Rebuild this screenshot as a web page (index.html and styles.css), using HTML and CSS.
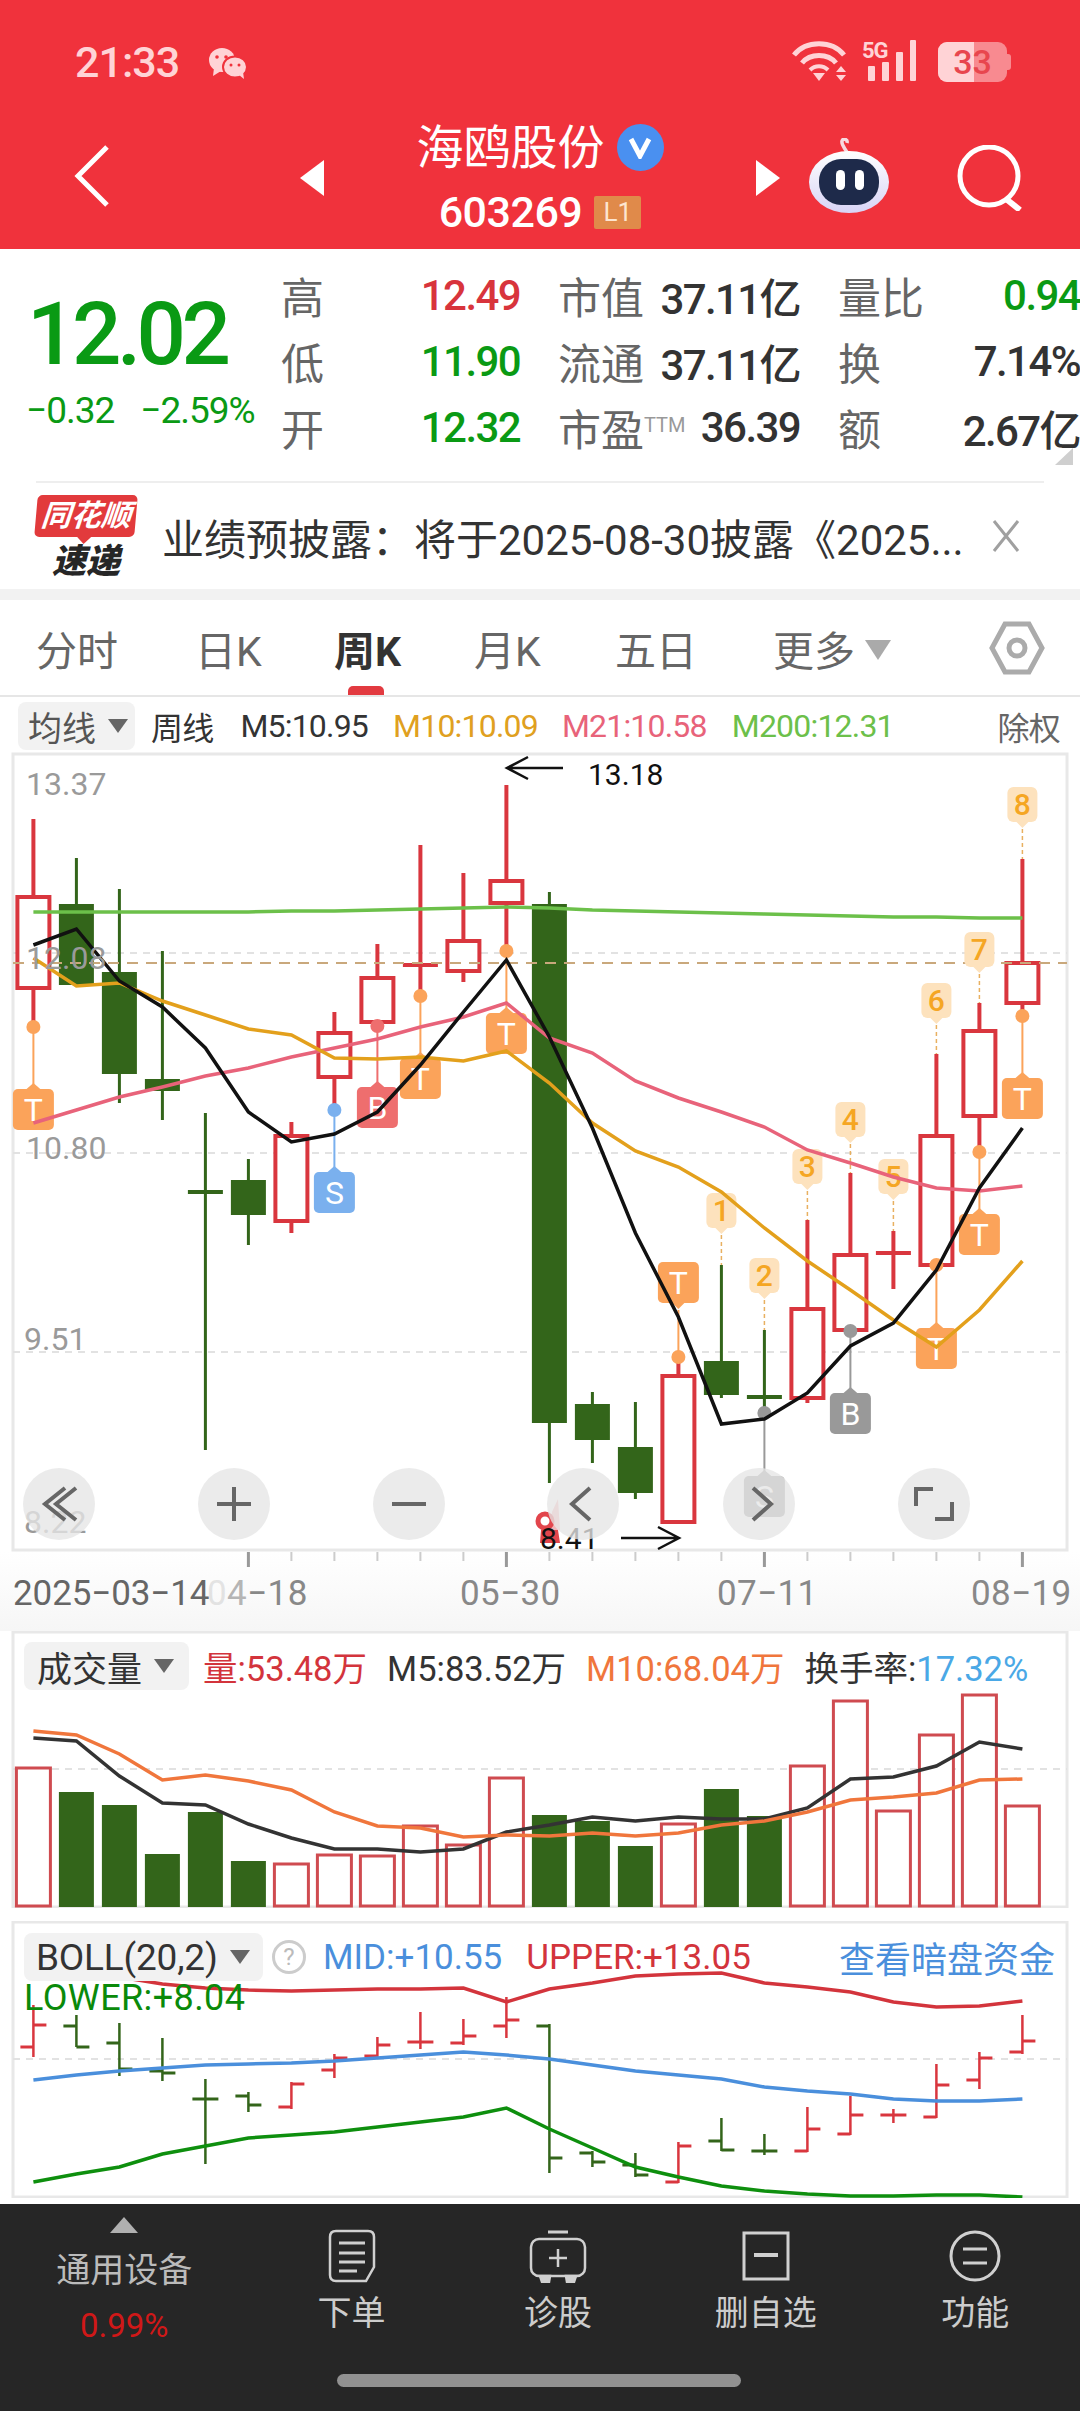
FILE: index.html
```html
<!DOCTYPE html>
<html lang="zh-CN">
<head>
    <meta charset="UTF-8">
    <meta name="viewport" content="width=device-width, initial-scale=1.0">
    <title>海鸥股份 603269</title>
    <link rel="stylesheet" href="styles.css">
</head>
<body>
    <div class="page">
        <header class="top">
            <div class="status-bar">
                <span class="clock">21:33</span>
                <svg class="wechat" width="40" height="32" viewBox="0 0 40 32">
                    <ellipse cx="14" cy="13" rx="13" ry="12" fill="#ffd3d6"/>
                    <path d="M6 21 L5 29 L13 24Z" fill="#ffd3d6"/>
                    <ellipse cx="27" cy="20" rx="12" ry="10.5" fill="#ffd3d6" stroke="#f0323c" stroke-width="2"/>
                    <path d="M31 28 L36 32 L35 25Z" fill="#ffd3d6"/>
                    <circle cx="9" cy="10" r="1.8" fill="#f0323c"/><circle cx="18" cy="10" r="1.8" fill="#f0323c"/>
                    <circle cx="23" cy="18" r="1.5" fill="#f0323c"/><circle cx="31" cy="18" r="1.5" fill="#f0323c"/>
                </svg>
                <div class="status-right">
                    <svg width="60" height="42" viewBox="0 0 60 42" fill="none" stroke="#ffd3d6" stroke-width="5">
                        <path d="M3 15 C15 0 41 0 53 15"/>
                        <path d="M11 23 C19 13 37 13 45 23"/>
                        <path d="M19 30 C24 25 32 25 37 30" stroke-width="4"/>
                        <path d="M22 33 H34 L28 41Z" fill="#ffd3d6" stroke="none"/>
                        <path d="M50 26 L55 32 H45Z M45 35 H55 L50 41Z" fill="#ffd3d6" stroke="none"/>
                    </svg>
                    <svg class="signal" width="58" height="42" viewBox="0 0 58 42" fill="#ffd3d6">
                        <text x="0" y="18" class="five-g">5G</text>
                        <rect x="6" y="26" width="7" height="15" rx="1"/>
                        <rect x="20" y="22" width="7" height="19" rx="1"/>
                        <rect x="34" y="12" width="7" height="29" rx="1"/>
                        <rect x="48" y="0" width="6" height="41" rx="1"/>
                    </svg>
                    <div class="battery"><span class="battery-fill"></span><span class="battery-num">33</span></div>
                    <span class="battery-nub"></span>
                </div>
            </div>
            <nav class="nav-bar">
                <svg class="back" width="36" height="64" viewBox="0 0 36 64" fill="none" stroke="#fff" stroke-width="5"><path d="M33 3 L4 32 L33 61"/></svg>
                <span class="tri tri-left"></span>
                <div class="stock">
                    <div class="stock-name">海鸥股份<span class="v-badge"><svg width="24" height="22" viewBox="0 0 24 22" fill="none" stroke="#fff" stroke-width="5"><path d="M3 2 L12 19 L21 2"/></svg></span></div>
                    <div class="stock-code">603269<span class="level">L1</span></div>
                </div>
                <span class="tri tri-right"></span>
                <svg class="robot" width="82" height="76" viewBox="0 0 82 76">
                    <defs>
                        <linearGradient id="head" x1="0" y1="0" x2="0" y2="1">
                            <stop offset="0" stop-color="#fff"/><stop offset="1" stop-color="#d8d4f6"/>
                        </linearGradient>
                    </defs>
                    <path d="M40 16 C37 10 33 7 34 3 C35 0 40 1 39 5" fill="none" stroke="#f6d9e0" stroke-width="3.5"/>
                    <ellipse cx="41" cy="44" rx="40" ry="31" fill="url(#head)"/>
                    <rect x="11" y="21" width="60" height="46" rx="22" fill="#1e2a4a"/>
                    <rect x="28" y="32" width="9" height="20" rx="4.5" fill="#fff"/>
                    <rect x="47" y="32" width="9" height="20" rx="4.5" fill="#fff"/>
                </svg>
                <svg class="search" width="68" height="66" viewBox="0 0 68 66" fill="none" stroke="#fff" stroke-width="5"><circle cx="33" cy="31" r="29"/><path d="M50 54 L64 65" stroke-width="6"/></svg>
            </nav>
        </header>

        <section class="quote">
            <div class="quote-main">
                <div class="price">12.02</div>
                <div class="change"><span>−0.32</span><span>−2.59%</span></div>
            </div>
            <div class="quote-grid">
                <div class="cell"><span class="label">高</span><span class="val up">12.49</span></div>
                <div class="cell"><span class="label">市值</span><span class="val">37.11亿</span></div>
                <div class="cell"><span class="label">量比</span><span class="val down">0.94</span></div>
                <div class="cell"><span class="label">低</span><span class="val down">11.90</span></div>
                <div class="cell"><span class="label">流通</span><span class="val">37.11亿</span></div>
                <div class="cell"><span class="label">换</span><span class="val">7.14%</span></div>
                <div class="cell"><span class="label">开</span><span class="val down">12.32</span></div>
                <div class="cell"><span class="label">市盈<sup class="ttm">TTM</sup></span><span class="val">36.39</span></div>
                <div class="cell"><span class="label">额</span><span class="val">2.67亿</span></div>
            </div>
            <span class="corner"></span>
        </section>

        <section class="ticker">
            <div class="logo">
                <div class="logo-top">同花顺</div>
                <div class="logo-bottom">速递</div>
            </div>
            <div class="ticker-text">业绩预披露：将于2025-08-30披露《2025...</div>
            <svg class="close" width="28" height="34" viewBox="0 0 28 34" fill="none" stroke="#a0a0a0" stroke-width="3"><path d="M2 2 L26 32 M26 2 L2 32"/></svg>
        </section>

        <div class="band"></div>

        <div class="tabs">
            <span class="tab tab-1">分时</span>
            <span class="tab tab-2">日K</span>
            <span class="tab tab-3 active">周K</span>
            <span class="tab tab-4">月K</span>
            <span class="tab tab-5">五日</span>
            <span class="tab tab-6">更多<i class="tab-arrow"></i></span>
            <svg class="hex" width="56" height="54" viewBox="0 0 56 54" fill="none" stroke="#ababab" stroke-width="5"><path d="M16 3 H40 L53 27 L40 51 H16 L3 27Z"/><circle cx="28" cy="27" r="8"/></svg>
        </div>

        <div class="ma-row">
            <span class="pill pill-ma">均线<i class="pill-arrow"></i></span>
            <span class="ma ma-week">周线</span>
            <span class="ma ma-5">M5:10.95</span>
            <span class="ma ma-10">M10:10.09</span>
            <span class="ma ma-21">M21:10.58</span>
            <span class="ma ma-200">M200:12.31</span>
            <span class="ma ma-fq">除权</span>
        </div>

        <svg id="kline" class="chart kline" width="1080" height="798" viewBox="0 754 1080 798"></svg>
        <svg id="axis" class="axis" width="1080" height="79" viewBox="0 1552 1080 79"></svg>

        <section class="panel panel-vol">
            <svg id="volume" class="chart" width="1080" height="277" viewBox="0 1631 1080 277"></svg>
            <div class="legend">
                <span class="pill pill-vol">成交量<i class="pill-arrow"></i></span>
                <span class="lg lg-vol">量:53.48万</span>
                <span class="lg lg-m5">M5:83.52万</span>
                <span class="lg lg-m10">M10:68.04万</span>
                <span class="lg lg-rate">换手率:<b>17.32%</b></span>
            </div>
        </section>

        <section class="panel panel-boll">
            <svg id="boll" class="chart" width="1080" height="277" viewBox="0 1921 1080 277"></svg>
            <div class="legend">
                <span class="pill pill-boll">BOLL(20,2)<i class="pill-arrow"></i></span>
                <span class="help">?</span>
                <span class="lg lg-mid">MID:+10.55</span>
                <span class="lg lg-upper">UPPER:+13.05</span>
                <span class="lg lg-link">查看暗盘资金</span>
            </div>
            <div class="lower">LOWER:+8.04</div>
        </section>

        <footer class="bottom">
            <div class="bottom-items">
                <div class="sector">
                    <span class="sector-arrow"></span>
                    <span class="sector-name">通用设备</span>
                    <span class="sector-pct">0.99%</span>
                </div>
                <div class="action">
                    <svg width="48" height="54" viewBox="0 0 48 54" fill="none" stroke="#d0d0d0" stroke-width="2.5"><path d="M8 2 H40 Q46 2 46 8 V38 L38 52 H8 Q2 52 2 46 V8 Q2 2 8 2Z"/><path d="M11 14 H37 M11 24 H37 M11 33 H37 M11 42 H29" stroke-width="3"/></svg>
                    <span>下单</span>
                </div>
                <div class="action">
                    <svg width="58" height="54" viewBox="0 0 58 54" fill="none" stroke="#d0d0d0" stroke-width="2.5"><path d="M19 3 H39" stroke-width="3"/><rect x="2" y="10" width="54" height="37" rx="8"/><path d="M29 20 V38 M20 29 H38"/><path d="M11 47 H21 L20 53 H13Z M37 47 H47 L45 53 H38Z" fill="#d0d0d0"/></svg>
                    <span>诊股</span>
                </div>
                <div class="action action-wide">
                    <svg width="48" height="50" viewBox="0 0 48 50" fill="none" stroke="#d0d0d0" stroke-width="3"><rect x="2" y="2" width="44" height="46"/><path d="M12 24 H36" stroke-width="4"/></svg>
                    <span>删自选</span>
                </div>
                <div class="action action-wide">
                    <svg width="52" height="52" viewBox="0 0 52 52" fill="none" stroke="#d0d0d0" stroke-width="3"><circle cx="26" cy="26" r="24"/><path d="M14 19 H38 M14 33 H38"/></svg>
                    <span>功能</span>
                </div>
            </div>
            <div class="home-bar"></div>
        </footer>
    </div>
    <script src="script.js"></script>
</body>
</html>
```

FILE: styles.css
```css
* {
    box-sizing: border-box;
}

body {
    margin: 0;
    background-color: #fff;
    font-family: Roboto, "Noto Sans CJK SC", sans-serif;
    color: #333;
}

.page {
    width: 1080px;
    height: 2412px;
    overflow: hidden;
    display: flex;
    flex-direction: column;
}

/* header */
.top {
    height: 249px;
    flex: none;
    background-color: #f0323c;
}

.status-bar {
    height: 124px;
    padding: 40px 69px 0 75px;
    display: flex;
    align-items: flex-start;
}

.clock {
    font-size: 43px;
    line-height: 44px;
    font-weight: 500;
    color: #ffd3d6;
    letter-spacing: -1px;
}

.wechat {
    margin: 7px 0 0 29px;
}

.status-right {
    margin-left: auto;
    display: flex;
    align-items: flex-start;
}

.signal {
    margin-left: 11px;
    overflow: visible;
}

.five-g {
    font-size: 22px;
    font-weight: 700;
    letter-spacing: -1px;
}

.battery {
    position: relative;
    width: 69px;
    height: 40px;
    margin: 2px 0 0 18px;
    border-radius: 9px;
    background-color: rgba(255, 211, 214, 0.55);
    text-align: center;
    overflow: hidden;
}

.battery-fill {
    position: absolute;
    left: 0;
    top: 0;
    bottom: 0;
    width: 36px;
    background-color: #ffd3d6;
}

.battery-num {
    position: relative;
    font-size: 34px;
    line-height: 40px;
    font-weight: 500;
    color: #e8464e;
}

.battery-nub {
    width: 4px;
    height: 16px;
    margin-top: 14px;
    border-radius: 0 3px 3px 0;
    background-color: rgba(255, 211, 214, 0.55);
}

.nav-bar {
    height: 125px;
    display: flex;
    align-items: flex-start;
    position: relative;
}

.back {
    margin: 20px 0 0 74px;
}

.tri {
    width: 0;
    height: 0;
    margin-top: 36px;
    border-top: 18px solid transparent;
    border-bottom: 18px solid transparent;
}

.tri-left {
    margin-left: 190px;
    border-right: 24px solid #fff;
}

.tri-right {
    border-left: 24px solid #fff;
}

.stock {
    width: 432px;
    text-align: center;
    color: #fff;
}

.stock-name {
    height: 58px;
    font-size: 47px;
    line-height: 48px;
    display: flex;
    justify-content: center;
    align-items: flex-start;
}

.v-badge {
    width: 47px;
    height: 47px;
    margin-left: 12px;
    border-radius: 50%;
    background-color: #4a90f0;
    display: flex;
    align-items: center;
    justify-content: center;
}

.stock-code {
    margin-top: 8px;
    font-size: 43px;
    line-height: 44px;
    font-weight: 500;
    letter-spacing: -0.5px;
    display: flex;
    justify-content: center;
    align-items: center;
    gap: 12px;
}

.level {
    width: 47px;
    height: 33px;
    background-color: #e08a4a;
    border-radius: 2px;
    font-size: 26px;
    line-height: 33px;
    font-weight: 400;
    letter-spacing: 0;
    color: #fde5d0;
}

.robot {
    margin: 14px 0 0 28px;
}

.search {
    margin: 21px 0 0 66px;
}

/* quote block */
.quote {
    position: relative;
    height: 232px;
    flex: none;
    display: flex;
    padding-top: 13px;
}

.quote-main {
    width: 281px;
    flex: none;
}

.price {
    margin: 24px 0 0 27px;
    font-size: 87px;
    line-height: 96px;
    font-weight: 500;
    letter-spacing: -4.5px;
    color: #0a9a14;
}

.change {
    margin: 9px 0 0 26px;
    display: flex;
    gap: 26px;
    font-size: 37px;
    line-height: 40px;
    letter-spacing: -1px;
    color: #0a9a14;
}

.quote-grid {
    flex: none;
    display: grid;
    grid-template-columns: 239px 280px 280px;
    grid-auto-rows: 66px;
}

.cell {
    display: flex;
    justify-content: space-between;
    align-items: center;
    padding-left: 38px;
}

.cell:nth-child(3n + 1) {
    padding-left: 0;
}

.label {
    font-size: 43px;
    color: #666;
    white-space: nowrap;
}

.ttm {
    font-size: 20px;
    color: #999;
    vertical-align: 14px;
    line-height: 0;
}

.val {
    font-size: 42px;
    font-weight: 500;
    letter-spacing: -1.6px;
    white-space: nowrap;
    color: #333;
}

.up {
    color: #d8343c;
}

.down {
    color: #0a9a14;
}

.corner {
    position: absolute;
    right: 7px;
    top: 199px;
    width: 0;
    height: 0;
    border-left: 18px solid transparent;
    border-bottom: 17px solid #cfcfcf;
}

/* news ticker */
.ticker {
    height: 108px;
    flex: none;
    margin: 0 36px;
    border-top: 2px solid #eee;
    display: flex;
    align-items: center;
}

.logo {
    width: 100px;
    flex: none;
    text-align: center;
}

.logo-top {
    position: relative;
    height: 42px;
    background-color: #e23a3c;
    border-radius: 5px;
    transform: skewX(-5deg);
    color: #fff;
    font-size: 30px;
    line-height: 42px;
    font-weight: 700;
    font-style: italic;
}

.logo-top::after {
    content: "";
    position: absolute;
    left: 42px;
    bottom: -7px;
    border-left: 8px solid transparent;
    border-right: 8px solid transparent;
    border-top: 8px solid #e23a3c;
}

.logo-bottom {
    margin-top: 7px;
    font-size: 34px;
    line-height: 34px;
    font-weight: 900;
    font-style: italic;
    color: #262626;
}

.ticker-text {
    margin-left: 26px;
    width: 820px;
    flex: none;
    font-size: 42px;
    white-space: nowrap;
}

.close {
    margin-left: 10px;
}

.band {
    height: 11px;
    flex: none;
    background-color: #f2f2f2;
}

/* period tabs */
.tabs {
    position: relative;
    height: 97px;
    flex: none;
    padding-left: 36px;
    border-bottom: 2px solid #e6e6e6;
    display: flex;
    align-items: center;
}

.tab {
    font-size: 41px;
    color: #666;
    white-space: nowrap;
}

.tab-1 { width: 159px; }
.tab-2 { width: 139px; }
.tab-3 { width: 140px; }
.tab-4 { width: 141px; }
.tab-5 { width: 158px; }
.tab-6 { width: 216px; }

.tab.active {
    color: #333;
    font-weight: 700;
}

.tab.active::after {
    content: "";
    position: absolute;
    left: 348px;
    bottom: 0;
    width: 36px;
    height: 9px;
    border-radius: 5px 5px 0 0;
    background-color: #e23a40;
}

.tab-arrow {
    display: inline-block;
    margin-left: 10px;
    vertical-align: 6px;
    border-left: 13px solid transparent;
    border-right: 13px solid transparent;
    border-top: 20px solid #aaa;
}

/* moving average row */
.ma-row {
    position: relative;
    height: 57px;
    flex: none;
    padding: 3px 0 2px 18px;
    display: flex;
    align-items: center;
    font-size: 32px;
    white-space: nowrap;
}

.pill {
    height: 48px;
    flex: none;
    display: flex;
    align-items: center;
    background-color: #f2f2f2;
    border-radius: 8px;
    font-size: 34px;
    color: #333;
}

.pill-ma {
    width: 117px;
    padding-left: 10px;
    color: #555;
}

.pill-arrow {
    margin-left: 12px;
    border-left: 10px solid transparent;
    border-right: 10px solid transparent;
    border-top: 14px solid #666;
}

.ma {
    letter-spacing: -0.8px;
}

.ma-week { margin-left: 16px; }
.ma-5 { margin-left: 27px; color: #333; }
.ma-10 { margin-left: 25px; color: #e0a020; }
.ma-21 { margin-left: 24px; color: #e8637a; }
.ma-200 { margin-left: 25px; color: #6cc04a; }
.ma-fq { margin-left: auto; margin-right: 20px; color: #666; }

/* charts */
.chart {
    display: block;
    flex: none;
}

.kline {
    overflow: visible;
    position: relative;
    z-index: 1;
}

.axis {
    display: block;
    flex: none;
    background: linear-gradient(#fff, #f6f6f6);
}

.axis-label {
    font-size: 35px;
    letter-spacing: 0.4px;
    fill: #888;
}

.axis-label-first {
    letter-spacing: -0.1px;
    fill: #666;
}

.price-label {
    font-size: 32px;
    fill: #9a9a9a;
}

.note {
    font-size: 30px;
    fill: #111;
}

.mark-text {
    font-size: 32px;
    fill: #fff;
    text-anchor: middle;
}

.tag-text {
    font-size: 30px;
    font-weight: 500;
    fill: #f5a623;
    text-anchor: middle;
}

.panel {
    position: relative;
    flex: none;
}

.panel-boll {
    margin-top: 13px;
}

.legend {
    position: absolute;
    left: 24px;
    top: 10px;
    right: 25px;
    display: flex;
    align-items: center;
    white-space: nowrap;
}

.lg {
    font-size: 34.5px;
}

.pill-vol {
    width: 165px;
    padding-left: 13px;
    font-size: 35px;
}

.lg-vol { margin-left: 14px; color: #d3343c; }
.lg-m5 { margin-left: 20px; color: #333; }
.lg-m10 { margin-left: 20px; color: #f0763c; }
.lg-rate { margin-left: 20px; color: #333; }

.lg-rate b {
    font-weight: 400;
    color: #4aa8e6;
}

.pill-boll {
    width: 239px;
    padding-left: 12px;
    font-size: 37px;
    letter-spacing: -0.2px;
}

.help {
    width: 34px;
    height: 34px;
    margin-left: 9px;
    flex: none;
    border: 3px solid #ccc;
    border-radius: 50%;
    font-size: 24px;
    line-height: 28px;
    text-align: center;
    color: #bbb;
}

.lg-mid { margin-left: 17px; color: #4a8fdc; font-size: 35px; }
.lg-upper { margin-left: 24px; color: #d3343c; font-size: 35px; }
.lg-link { margin-left: auto; font-size: 36px; color: #4a8fdc; }

.lower {
    position: absolute;
    left: 24px;
    top: 57px;
    font-size: 36px;
    line-height: 40px;
    letter-spacing: 0.4px;
    color: #0a8a0a;
}

/* bottom bar */
.bottom {
    height: 207px;
    margin-top: 6px;
    flex: none;
    background-color: #262626;
    position: relative;
}

.bottom-items {
    display: flex;
    height: 170px;
}

.sector {
    width: 249px;
    padding: 13px 0 0 0;
    display: flex;
    flex-direction: column;
    align-items: center;
}

.sector-arrow {
    border-left: 14px solid transparent;
    border-right: 14px solid transparent;
    border-bottom: 16px solid #b0b0b0;
}

.sector-name {
    margin-top: 13px;
    font-size: 34px;
    line-height: 48px;
    color: #bbb;
}

.sector-pct {
    margin-top: 12px;
    font-size: 33px;
    line-height: 40px;
    color: #d01818;
}

.action {
    width: 207px;
    padding-top: 25px;
    display: flex;
    flex-direction: column;
    align-items: center;
    font-size: 34px;
    color: #ccc;
}

.action-wide {
    width: 210px;
}

.action svg {
    height: 54px;
    margin-bottom: 6px;
}

.action span {
    line-height: 48px;
}

.home-bar {
    width: 404px;
    height: 13px;
    margin-left: 337px;
    border-radius: 7px;
    background-color: #919191;
}
```

FILE: script.js
```javascript
const RED = '#d9363e';
const GREEN = '#33651a';
const X = i => 33.4 + 43 * i;

// high, body top, body bottom, low, colour (page pixels)
const candles = [
    [819, 897, 988, 1027, 'r'], [858, 904, 985, 985, 'g'], [889, 972, 1074, 1103, 'g'],
    [951, 1079, 1091, 1120, 'g'], [1113, 1190, 1194, 1450, 'g'], [1159, 1180, 1215, 1245, 'g'],
    [1122, 1136, 1221, 1233, 'r'], [1012, 1033, 1077, 1110, 'r'], [944, 978, 1022, 1027, 'r'],
    [845, 963, 967, 996, 'r'], [873, 941, 971, 982, 'r'], [785, 881, 903, 951, 'r'],
    [892, 904, 1423, 1483, 'g'], [1392, 1404, 1440, 1463, 'g'], [1402, 1447, 1493, 1499, 'g'],
    [1357, 1376, 1522, 1522, 'r'], [1265, 1361, 1395, 1398, 'g'], [1330, 1395, 1399, 1413, 'g'],
    [1220, 1309, 1398, 1403, 'r'], [1173, 1255, 1330, 1330, 'r'], [1231, 1251, 1255, 1289, 'r'],
    [1054, 1136, 1265, 1265, 'r'], [1003, 1031, 1116, 1152, 'r'], [859, 963, 1003, 1016, 'r']
];

const m5 = [945, 929, 981, 1007, 1048, 1112, 1142, 1134, 1112, 1065, 1012, 960, 1037, 1128, 1233, 1317, 1424, 1419, 1393, 1346, 1323, 1270, 1188, 1128];
const m10 = [958, 986, 983, 1001, 1015, 1029, 1035, 1058, 1059, 1057, 1061, 1051, 1083, 1123, 1151, 1167, 1192, 1228, 1261, 1290, 1320, 1347, 1310, 1261];
const m21 = [1123, 1110, 1097, 1087, 1076, 1068, 1057, 1048, 1039, 1027, 1017, 1003, 1038, 1053, 1081, 1098, 1112, 1127, 1150, 1163, 1177, 1188, 1191, 1186];
const m200 = [912, 912, 912, 912, 912, 912, 911, 911, 910, 909, 908, 907, 908, 910, 911, 912, 913, 914, 915, 916, 917, 917, 918, 918];

const volTop = [1768, 1792, 1805, 1854, 1812, 1861, 1864, 1855, 1856, 1826, 1845, 1778, 1815, 1821, 1846, 1824, 1789, 1816, 1766, 1701, 1811, 1735, 1695, 1806];
const volBlack = [1738, 1741, 1776, 1803, 1805, 1824, 1838, 1849, 1849, 1852, 1849, 1832, 1825, 1817, 1821, 1817, 1819, 1819, 1808, 1779, 1777, 1766, 1742, 1749];
const volOrange = [1731, 1735, 1754, 1780, 1775, 1781, 1790, 1812, 1826, 1828, 1837, 1835, 1836, 1833, 1836, 1833, 1825, 1821, 1812, 1800, 1797, 1793, 1780, 1779];

const upper = [1978, 1977, 1977, 1984, 1988, 1990, 1991, 1990, 1989, 1989, 1988, 2002, 1989, 1983, 1976, 1974, 1973, 1983, 1987, 1992, 2002, 2007, 2006, 2001];
const mid = [2080, 2075, 2071, 2068, 2065, 2064, 2063, 2061, 2058, 2055, 2052, 2055, 2059, 2065, 2071, 2075, 2079, 2087, 2091, 2094, 2099, 2101, 2101, 2099];
const lower = [2182, 2174, 2167, 2154, 2146, 2138, 2135, 2132, 2127, 2122, 2117, 2108, 2129, 2148, 2167, 2177, 2186, 2191, 2194, 2196, 2196, 2195, 2195, 2197];

// high, left tick, right tick, low (y in the boll panel)
const bars = [
    [2005, 2047, 2025, 2057], [2015, 2026, 2047, 2047], [2023, 2043, 2069, 2076], [2038, 2071, 2073, 2081],
    [2079, 2099, 2099, 2164], [2092, 2096, 2105, 2112], [2082, 2107, 2084, 2109], [2054, 2070, 2058, 2078],
    [2037, 2056, 2045, 2057], [2012, 2042, 2042, 2049], [2019, 2043, 2036, 2045], [1997, 2026, 2020, 2038],
    [2024, 2026, 2158, 2173], [2151, 2153, 2162, 2167], [2153, 2165, 2175, 2177], [2142, 2182, 2146, 2183],
    [2118, 2141, 2150, 2151], [2134, 2151, 2151, 2155], [2107, 2151, 2129, 2152], [2096, 2134, 2115, 2135],
    [2109, 2115, 2115, 2123], [2064, 2117, 2085, 2118], [2052, 2080, 2058, 2089], [2015, 2052, 2041, 2054]
];

// candle index, dot y, box top, colour, letter
const marks = [
    [0, 1027, 1089, '#fba35a', 'T'], [7, 1110, 1172, '#7ab0ee', 'S'], [8, 1026, 1087, '#ee6e6e', 'B'],
    [9, 996, 1058, '#fba35a', 'T'], [11, 951, 1013, '#fba35a', 'T'], [17, 1413, 1476, '#999999', 'S'],
    [19, 1331, 1393, '#999999', 'B'], [21, 1265, 1328, '#fba35a', 'T'], [22, 1152, 1214, '#fba35a', 'T'],
    [23, 1016, 1078, '#fba35a', 'T']
];

// candle index, tag top, dash end, number
const tags = [
    [16, 1193, 1265, 1], [17, 1258, 1330, 2], [18, 1149, 1220, 3], [19, 1102, 1173, 4],
    [20, 1159, 1231, 5], [21, 983, 1054, 6], [22, 932, 1003, 7], [23, 787, 859, 8]
];

const rect = (x, y, w, h, attrs) => `<rect x="${x}" y="${y}" width="${w}" height="${h}" ${attrs}/>`;
const line = (x1, y1, x2, y2, color, width, extra = '') =>
    `<line x1="${x1}" y1="${y1}" x2="${x2}" y2="${y2}" stroke="${color}" stroke-width="${width}" ${extra}/>`;
const poly = (ys, color, width) =>
    `<polyline points="${ys.map((y, i) => X(i) + ',' + y).join(' ')}" fill="none" stroke="${color}" stroke-width="${width}" stroke-linejoin="miter"/>`;
const frame = (top, bottom) =>
    rect(13, top, 1054, bottom - top, 'fill="none" stroke="#e8e8e8" stroke-width="3"');
const grid = y => line(13, y, 1067, y, '#e2e2e2', 2, 'stroke-dasharray="7 6"');

function drawCandle(c, i) {
    const [high, top, bottom, low, color] = c;
    const x = X(i);
    if (color === 'g') {
        return line(x, high, x, low, GREEN, 3) + rect(x - 17.5, top, 35, bottom - top, `fill="${GREEN}"`);
    }
    if (bottom - top < 6) {
        return line(x, high, x, low, RED, 4) + rect(x - 17.5, top, 35, bottom - top, `fill="${RED}"`);
    }
    return line(x, high, x, top, RED, 4) + line(x, bottom, x, low, RED, 4) +
        rect(x - 16, top, 32, bottom - top, `fill="#fff" stroke="${RED}" stroke-width="4"`);
}

function drawMark(m) {
    const [i, dotY, boxTop, color, letter] = m;
    const x = X(i);
    return line(x, dotY, x, boxTop - 5, color, 2) +
        `<circle cx="${x}" cy="${dotY}" r="7" fill="${color}"/>` +
        `<path d="M${x - 8} ${boxTop + 1} L${x} ${boxTop - 6} L${x + 8} ${boxTop + 1}Z" fill="${color}"/>` +
        rect(x - 20.5, boxTop, 41, 41, `rx="5" fill="${color}"`) +
        `<text x="${x}" y="${boxTop + 32}" class="mark-text">${letter}</text>`;
}

function drawTag(t) {
    const [i, top, dashEnd, num] = t;
    const x = X(i);
    return line(x, top + 42, x, dashEnd, '#e8b060', 1.5, 'stroke-dasharray="4 3"') +
        `<path d="M${x - 8} ${top + 33} L${x} ${top + 41} L${x + 8} ${top + 33}Z" fill="#fde2bd"/>` +
        rect(x - 15, top, 30, 35, 'rx="6" fill="#fde2bd"') +
        `<text x="${x}" y="${top + 28}" class="tag-text">${num}</text>`;
}

function drawButton(cx, inner) {
    return `<circle cx="${cx}" cy="1504" r="36" fill="#e6e6e6" fill-opacity="0.78"/>` +
        `<g fill="none" stroke="#666" stroke-width="4">${inner}</g>`;
}

function drawKline() {
    let s = frame(754, 1550);
    s += grid(953) + grid(1153) + grid(1352);
    s += candles.map(drawCandle).join('');
    s += marks.map(drawMark).join('');
    // T above the candle at 15
    const tx = X(15);
    s += line(tx, 1357, tx, 1310, '#fba35a', 2) + `<circle cx="${tx}" cy="1357" r="7" fill="#fba35a"/>` +
        `<path d="M${tx - 8} 1301 L${tx} 1309 L${tx + 8} 1301Z" fill="#fba35a"/>` +
        rect(tx - 20.5, 1262, 41, 41, 'rx="5" fill="#fba35a"') +
        `<text x="${tx}" y="1294" class="mark-text">T</text>`;
    s += line(13, 963, 1067, 963, '#c9a87c', 2, 'stroke-dasharray="11 8"');
    s += tags.map(drawTag).join('');
    s += poly(m200, '#6cc04a', 3.5) + poly(m21, '#e8637a', 3.5) + poly(m10, '#e3a01c', 3.5) + poly(m5, '#111', 3.5);

    [['13.37', 795, 26], ['12.08', 969, 26], ['10.80', 1159, 26], ['9.51', 1350, 24], ['8.22', 1533, 24]].forEach(l => {
        s += `<text x="${l[2]}" y="${l[1]}" class="price-label">${l[0]}</text>`;
    });

    // hand drawn notes
    s += `<g fill="none" stroke="#111" stroke-width="2.5"><path d="M563 768 H508 M528 757 L507 768 L528 779"/><path d="M621 1538 H678 M658 1527 L679 1538 L658 1549"/></g>`;
    s += `<path d="M550 1530 L552 1512 L558 1499 L560 1530Z" fill="#f3b4b6"/>`;
    s += `<circle cx="545" cy="1521" r="7" fill="none" stroke="#e2454c" stroke-width="5"/>`;
    s += `<path d="M541 1530 H558 L560 1543 H540Z" fill="#e2454c"/>`;
    s += `<text x="540" y="1549" class="note">8.41</text>`;
    s += `<text x="588" y="785" class="note">13.18</text>`;

    s += drawButton(59, '<path d="M65 1488 L45 1504 L65 1520 M76 1488 L56 1504 L76 1520"/>');
    s += drawButton(234, '<path d="M234 1487 V1521 M217 1504 H251"/>');
    s += drawButton(409, '<path d="M392 1504 H426"/>');
    s += drawButton(583, '<path d="M590 1488 L572 1504 L590 1520"/>');
    s += drawButton(759, '<path d="M753 1488 L771 1504 L753 1520"/>');
    s += drawButton(934, '<path d="M916 1506 V1489 H933 M952 1502 V1519 H935"/>');
    document.getElementById('kline').innerHTML = s;
}

function drawAxis() {
    let s = '';
    for (let i = 5; i < 24; i++) {
        const major = (i - 5) % 6 === 0;
        s += line(X(i), 1552, X(i), major ? 1567 : 1561, major ? '#999' : '#ccc', major ? 3 : 2);
    }
    s += `<text x="13" y="1605" class="axis-label axis-label-first">2025−03−14</text>`;
    s += `<text x="207" y="1605" class="axis-label"><tspan opacity="0.2">0</tspan><tspan opacity="0.6">4</tspan>−18</text>`;
    s += `<text x="460" y="1605" class="axis-label">05−30</text>`;
    s += `<text x="717" y="1605" class="axis-label">07−11</text>`;
    s += `<text x="971" y="1605" class="axis-label">08−19</text>`;
    document.getElementById('axis').innerHTML = s;
}

function drawVolume() {
    let s = frame(1632, 1907) + grid(1769);
    volTop.forEach((top, i) => {
        const x = X(i);
        if (candles[i][4] === 'g') {
            s += rect(x - 17.5, top, 35, 1907 - top, `fill="${GREEN}"`);
        } else {
            s += rect(x - 17, top, 34, 1906 - top, 'fill="#fff" stroke="#cf4b50" stroke-width="3"');
        }
    });
    s += poly(volBlack, '#333', 3.5) + poly(volOrange, '#f0763c', 3.5);
    document.getElementById('volume').innerHTML = s;
}

function drawBoll() {
    let s = frame(1922, 2197) + grid(2059);
    bars.forEach((b, i) => {
        const x = X(i);
        const color = candles[i][4] === 'g' ? GREEN : RED;
        s += line(x, b[0], x, b[3], color, 2.5);
        s += line(x - 13, b[1], x, b[1], color, 3) + line(x, b[2], x + 13, b[2], color, 3);
    });
    s += poly(upper, '#d3343c', 3.5) + poly(mid, '#4a8fdc', 3.5) + poly(lower, '#0e8f0e', 3.5);
    document.getElementById('boll').innerHTML = s;
}

drawKline();
drawAxis();
drawVolume();
drawBoll();
```
